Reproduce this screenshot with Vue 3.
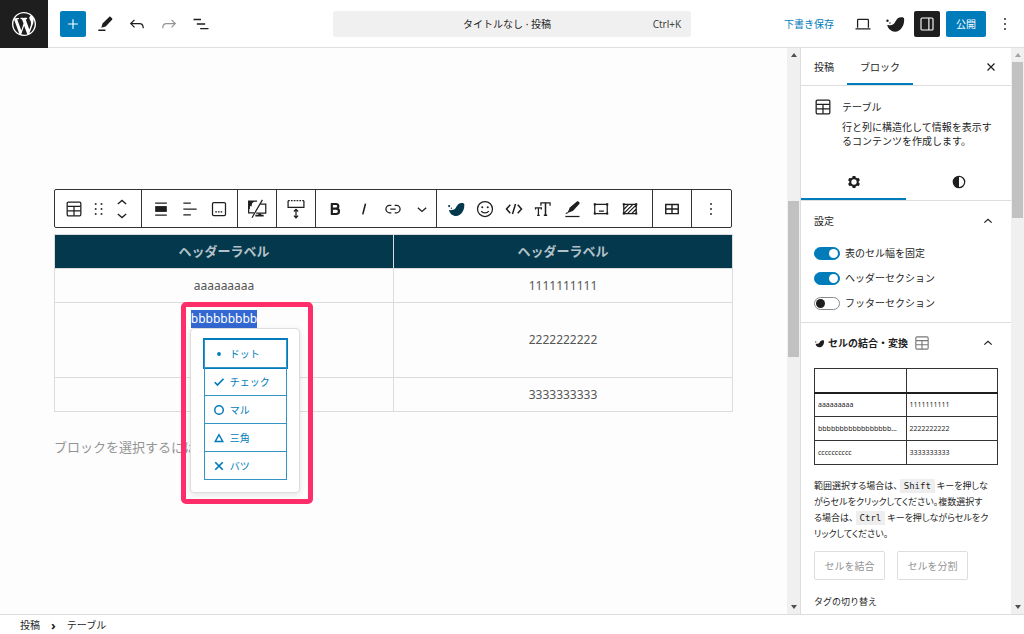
<script setup>
import { ref } from 'vue'

const swell =
  '<path fill="currentColor" stroke="none" d="M3.500 13.200c2.800.4 5.500.1 7.300-1.500C12.800 9.800 13.500 5 18.500 4.700c2.200-.1 3.600.4 3.500 2-.1 2.600 0 5-1.900 8.300-2 3.500-5 5.400-8.100 5.400-4 0-7.500-2.700-8.500-7.200z"/><circle cx="3.800" cy="8.500" r="1.300" fill="currentColor" stroke="none"/><circle cx="6.500" cy="11" r=".8" fill="currentColor" stroke="none"/>'

const icons = {
  plus: '<path d="M12 5.500v13M5.500 12h13"/>',
  pen: '<path fill="currentColor" stroke="none" d="M20.500 5.200l-1.800-1.700c-.5-.5-1.300-.5-1.800 0L9 11.400 7.600 16.500l5.200-1.500 7.700-8c.5-.5.500-1.300 0-1.800z"/><path stroke-width="1.800" d="M4 19.500h8.500"/>',
  undo: '<path d="M9 7l-4.500 4.500L9 16M5 11.500h10c3 0 4.500 1.800 4.500 5.500"/>',
  redo: '<path d="M15 7l4.500 4.500L15 16M19 11.500H9c-3 0-4.500 1.800-4.500 5.500"/>',
  list: '<path stroke-width="1.700" d="M3 6.500h9M7 12h10M11 17.500h10"/>',
  laptop: '<path d="M5.500 16.500V7.500c0-.6.400-1 1-1h11c.6 0 1 .4 1 1v9M3 17.800h18"/>',
  panel: '<rect x="4" y="4" width="16" height="16" rx="1.500"/><path d="M14.500 4v16"/>',
  dots: '<g fill="currentColor" stroke="none"><rect x="11" y="5" width="2" height="2"/><rect x="11" y="11" width="2" height="2"/><rect x="11" y="17" width="2" height="2"/></g>',
  close: '<path stroke-width="2" d="M6 6l12 12M18 6L6 18"/>',
  table: '<rect x="3.800" y="3.800" width="16.400" height="16.400" rx="1.500"/><path d="M4 8.800h16M4 14.300h16M12 9v11"/>',
  drag: '<g fill="currentColor" stroke="none"><rect x="7" y="5" width="2" height="2"/><rect x="7" y="11" width="2" height="2"/><rect x="7" y="17" width="2" height="2"/><rect x="14" y="5" width="2" height="2"/><rect x="14" y="11" width="2" height="2"/><rect x="14" y="17" width="2" height="2"/></g>',
  mover: '<path d="M7 6l5-4.300L17 6M7 18l5 4.300L17 18"/>',
  align: '<path d="M5 4.800h14M5 19.200h14"/><path fill="currentColor" stroke="none" d="M5 8.500h14v7H5z"/>',
  textAlign: '<path d="M4 5h9M4 12h16M4 19h9"/>',
  caption: '<rect x="4.200" y="4.200" width="15.600" height="15.600" rx="1.500"/><path stroke-dasharray="2 1.200" d="M7.500 15.500h9"/>',
  screens: '<path d="M12 2.500H2v14h6.500M16 6h6.500v11H11"/><path d="M18.500 1L6 22.500"/><path fill="currentColor" stroke="none" d="M2 2.500h7L6 5.500 5.500 9 3.500 8.500 3.500 12H2zM10 19h3l1.500-1.500h2L17.500 19H20v2H10z"/>',
  spacer: '<path d="M2.500 2v8h19V2"/><path stroke-dasharray="2 1.400" d="M2.500 2h19"/><path d="M12 13v9M9.500 15L12 12.500 14.500 15M9.500 20l2.500 2.500 2.500-2.500"/>',
  bold: '<path stroke-width="2.600" d="M8.200 6v12M7 6h6c2 0 3 1.200 3 2.800s-1 2.800-3 2.800H8M8 11.600h5.300c2.200 0 3.500 1.300 3.500 3.200s-1.300 3.200-3.500 3.200H7"/>',
  italic: '<path stroke-width="1.900" d="M13.800 5.500L10.500 18.500"/>',
  link: '<path d="M10 7.500H8a4.500 4.500 0 000 9h2M14 7.500h2a4.500 4.500 0 010 9h-2M8.800 12h6.400"/>',
  down: '<path d="M7 10.500l5 4.500 5-4.500"/>',
  up: '<path stroke-width="1.800" d="M6.500 14.500L12 9.500l5.500 5"/>',
  swell,
  smile: '<circle cx="12" cy="12" r="9"/><path d="M7.500 14.500c2 3 7 3 9 0"/><circle cx="8.700" cy="9.800" r="1.200" fill="currentColor" stroke="none"/><circle cx="15.300" cy="9.800" r="1.200" fill="currentColor" stroke="none"/>',
  code: '<path stroke-width="1.800" d="M7.500 7L3 12l4.500 5M16.500 7l4.500 5-4.500 5M13.800 6l-3.600 12"/>',
  size: '<path stroke-width="1.800" d="M15 4.500v15M13 19.500h4"/><path d="M9.500 8V4.500h11V8M3 12.500v-2h7v2M6.500 10.500v9M5 19.500h3"/>',
  marker: '<path fill="currentColor" stroke="none" d="M20.500 3.500c-1-1-2-1-3-.2L9 10.500l-.5 2-2.500 4.500 5-2 2-.5 7.500-8.300c.8-1 .8-1.900 0-2.700zM5.500 16l2 1.500-3.500.5z"/><path d="M4 21h17"/>',
  frame: '<path d="M4.500 6.500h15v11h-15zM9.500 14.500h6"/><g fill="currentColor" stroke="none"><path d="M3.300 5.200h2.500v2.500H3.300zM18.200 5.200h2.500v2.500h-2.500zM3.300 16.200h2.500v2.500H3.300zM18.200 16.200h2.500v2.500h-2.500z"/></g>',
  hatch: '<path d="M4.500 6.500h15v11h-15zM5 12l5.500-5.500M5 17L15.500 6.500M9.500 17L19.500 7M14 17.500l5.500-5.500"/><g fill="currentColor" stroke="none"><path d="M3.300 5.200h2.500v2.500H3.300zM18.200 5.200h2.500v2.500h-2.500zM3.300 16.200h2.500v2.500H3.300zM18.200 16.200h2.500v2.500h-2.500z"/></g>',
  grid: '<path stroke-width="1.700" d="M4.500 6.500h15v11h-15zM4.500 12h15M12 6v12"/>',
  cog: '<circle cx="12" cy="12" r="5" stroke-width="2.800"/><path stroke-width="4" d="M12 7.500V4M12 16.500V20M8.100 9.800L5 8M15.900 14.200L19 16M8.100 14.200L5 16M15.900 9.800L19 8"/>',
  contrast: '<circle cx="12" cy="12" r="7.600" stroke-width="1.700"/><path fill="currentColor" stroke="none" d="M12 4.500v15a7.500 7.500 0 010-15z"/>',
  dot: '<circle cx="12" cy="12" r="3.800" fill="currentColor" stroke="none"/>',
  check: '<path stroke-width="3.500" d="M3.500 12.500l5.500 5.500L21 5.500"/>',
  circle: '<circle cx="12" cy="12" r="8.500" stroke-width="3"/>',
  triangle: '<path stroke-width="3" d="M12 5.500l7.500 13.500h-15z"/>',
  cross: '<path stroke-width="3.500" d="M4.500 4.500l15 15M19.500 4.500l-15 15"/>'
}

const headerTools = [
  { icon: 'pen', label: 'ツール' },
  { icon: 'undo', label: '元に戻す' },
  { icon: 'redo', label: 'やり直し', off: true },
  { icon: 'list', label: 'ドキュメント概観' }
]

const groups = [
  { size: 'w87', items: ['table', 'drag', 'mover'] },
  { size: 'w96', items: ['align', 'textAlign', 'caption'] },
  { size: 'w39', items: ['screens'] },
  { size: 'w39', items: ['spacer'] },
  { size: 'w121', items: ['bold', 'italic', 'link', 'down'] },
  { size: 'w216', items: ['swell', 'smile', 'code', 'size', 'marker', 'frame', 'hatch'] },
  { size: 'w39', items: ['grid'] },
  { size: 'w39', items: ['dots'] }
]

const marks = [
  { icon: 'dot', text: 'ドット' },
  { icon: 'check', text: 'チェック' },
  { icon: 'circle', text: 'マル' },
  { icon: 'triangle', text: '三角' },
  { icon: 'cross', text: 'バツ' }
]
const chosen = ref(0)

const toggles = ref([
  { id: 'fixed', text: '表のセル幅を固定', on: true },
  { id: 'head', text: 'ヘッダーセクション', on: true },
  { id: 'foot', text: 'フッターセクション', on: false }
])

const miniRows = [
  ['', ''],
  ['aaaaaaaaa', '1111111111'],
  ['bbbbbbbbbbbbbbbbb…', '2222222222'],
  ['cccccccccc', '3333333333']
]
</script>

<template>
  <div class="editor">
    <header class="top">
      <div class="top-left">
        <a href="#" class="logo" aria-label="WordPress">
          <svg viewBox="0 0 20 20"><path fill="currentColor" d="M20 10c0-5.510-4.490-10-10-10C4.480 0 0 4.490 0 10c0 5.520 4.480 10 10 10 5.510 0 10-4.480 10-10zM7.780 15.370L4.370 6.220c.55-.02 1.170-.08 1.170-.08.5-.06.44-1.130-.06-1.110 0 0-1.450.11-2.370.11-.18 0-.37 0-.58-.01C4.120 2.690 6.870 1.110 10 1.110c2.330 0 4.450.87 6.050 2.340-.68-.11-1.650.39-1.650 1.580 0 .74.45 1.360.9 2.100.35.61.55 1.360.55 2.460 0 1.490-1.400 5-1.400 5l-3.030-8.370c.54-.02.82-.17.82-.17.5-.05.44-1.250-.06-1.220 0 0-1.440.12-2.380.12-.87 0-2.330-.12-2.330-.12-.5-.03-.56 1.200-.06 1.220l.92.08 1.260 3.410zM17.410 10c.24-.64.74-1.870.43-4.250.7 1.290 1.050 2.710 1.050 4.250 0 3.290-1.730 6.240-4.400 7.780.97-2.590 1.940-5.200 2.920-7.780zM6.100 18.090C3.120 16.650 1.110 13.530 1.110 10c0-1.300.23-2.480.72-3.590C3.250 10.300 4.670 14.200 6.100 18.090zm4.030-6.630l2.580 6.980c-.86.29-1.760.45-2.710.45-.79 0-1.570-.11-2.290-.33.81-2.380 1.620-4.740 2.420-7.100z"/></svg>
        </a>
        <button class="sq blue" aria-label="ブロックを追加"><svg class="ico s18" viewBox="0 0 24 24" v-html="icons.plus" /></button>
        <button v-for="t in headerTools" :key="t.icon" class="sq" :class="{ off: t.off }" :aria-label="t.label">
          <svg class="ico" viewBox="0 0 24 24" v-html="icons[t.icon]" />
        </button>
      </div>
      <button class="command">
        <span>タイトルなし · 投稿</span>
        <span class="key">Ctrl+K</span>
      </button>
      <div class="top-right">
        <button class="save">下書き保存</button>
        <button class="sq" aria-label="表示"><svg class="ico" viewBox="0 0 24 24" v-html="icons.laptop" /></button>
        <button class="sq" aria-label="SWELL"><svg class="ico s22" viewBox="0 0 24 24" v-html="icons.swell" /></button>
        <button class="sq dark" aria-label="設定"><svg class="ico s18" viewBox="0 0 24 24" v-html="icons.panel" /></button>
        <button class="publish">公開</button>
        <button class="sq" aria-label="オプション"><svg class="ico" viewBox="0 0 24 24" v-html="icons.dots" /></button>
      </div>
    </header>

    <div class="middle">
      <main class="canvas">
        <div class="page">
          <div class="toolbar" role="toolbar" aria-label="ブロックツール">
            <div v-for="(g, i) in groups" :key="i" class="group" :class="g.size">
              <button v-for="name in g.items" :key="name" :class="name" :aria-label="name">
                <svg class="ico" viewBox="0 0 24 24" v-html="icons[name]" />
              </button>
            </div>
          </div>

          <table class="content">
            <thead>
              <tr><th>ヘッダーラベル</th><th>ヘッダーラベル</th></tr>
            </thead>
            <tbody>
              <tr><td>aaaaaaaaa</td><td>1111111111</td></tr>
              <tr class="tall">
                <td class="editing">
                  <div class="anchor">
                    <span class="selected">bbbbbbbbb</span>
                    <div class="popup">
                      <button
                        v-for="(m, i) in marks"
                        :key="m.icon"
                        :class="{ active: chosen === i }"
                        @click="chosen = i"
                      >
                        <svg class="ico s12" viewBox="0 0 24 24" v-html="icons[m.icon]" />
                        <span>{{ m.text }}</span>
                      </button>
                    </div>
                    <div class="highlight"></div>
                  </div>
                </td>
                <td>2222222222</td>
              </tr>
              <tr><td></td><td>3333333333</td></tr>
            </tbody>
          </table>

          <p class="placeholder">ブロックを選択するには</p>
        </div>
        <div class="scroll main-scroll"><i class="arrow up"></i><i class="thumb"></i><i class="arrow down"></i></div>
      </main>

      <aside class="side">
        <div class="side-body">
          <div class="tabs">
            <button>投稿</button>
            <button class="current">ブロック</button>
            <button class="close" aria-label="閉じる"><svg class="ico s14" viewBox="0 0 24 24" v-html="icons.close" /></button>
          </div>

          <div class="card">
            <svg class="ico" viewBox="0 0 24 24" v-html="icons.table" />
            <div>
              <h2>テーブル</h2>
              <p>行と列に構造化して情報を表示す<br>るコンテンツを作成します。</p>
            </div>
          </div>

          <div class="modes">
            <button class="current" aria-label="設定"><svg class="ico s18" viewBox="0 0 24 24" v-html="icons.cog" /></button>
            <button aria-label="スタイル"><svg class="ico s18" viewBox="0 0 24 24" v-html="icons.contrast" /></button>
          </div>

          <section class="settings">
            <button class="panel-title">設定<svg class="ico chev" viewBox="0 0 24 24" v-html="icons.up" /></button>
            <div v-for="t in toggles" :key="t.id" class="toggle">
              <input :id="t.id" v-model="t.on" type="checkbox">
              <label :for="t.id">{{ t.text }}</label>
            </div>
          </section>

          <section class="merge">
            <button class="panel-title strong">
              <svg class="ico s10" viewBox="0 0 24 24" v-html="icons.swell" />
              <span>セルの結合・変換</span>
              <svg class="ico s18 faint" viewBox="0 0 24 24" v-html="icons.table" />
              <svg class="ico chev" viewBox="0 0 24 24" v-html="icons.up" />
            </button>
            <table class="mini">
              <tbody>
                <tr v-for="(row, i) in miniRows" :key="i"><td v-for="(c, j) in row" :key="j">{{ c }}</td></tr>
              </tbody>
            </table>
            <p class="help">
              範囲選択する場合は、<code>Shift</code>キーを押しな<br>がらセルをクリックしてください。複数選択す<br>る場合は、<code>Ctrl</code>キーを押しながらセルをク<br>リックしてください。
            </p>
            <div class="pair">
              <button disabled>セルを結合</button>
              <button disabled>セルを分割</button>
            </div>
            <h3>タグの切り替え</h3>
          </section>
        </div>
        <div class="scroll side-scroll"><i class="arrow up dim"></i><i class="thumb"></i><i class="arrow down"></i></div>
      </aside>
    </div>

    <footer class="crumbs">
      <a href="#">投稿</a><span class="sep">›</span><a href="#">テーブル</a>
    </footer>
  </div>
</template>

<style>
body { margin: 0; overflow: hidden; }
</style>

<style scoped>
.editor {
  display: flex;
  flex-direction: column;
  height: 100vh;
  background: #fff;
  color: #1e1e1e;
  font: 10px/14px "Noto Sans", "Noto Sans CJK JP", sans-serif;
}
.editor * { box-sizing: border-box; }
button {
  border: 0;
  padding: 0;
  margin: 0;
  background: none;
  color: inherit;
  font: inherit;
  cursor: pointer;
}
a { color: inherit; text-decoration: none; }
h2, h3, p { margin: 0; font-size: 10px; font-weight: 400; }
.ico {
  display: block;
  flex: none;
  width: 20px;
  height: 20px;
  fill: none;
  stroke: currentColor;
  stroke-width: 1.500;
}
.s22 { width: 22px; height: 22px; }
.s18 { width: 18px; height: 18px; }
.s14 { width: 14px; height: 14px; }
.s12 { width: 12px; height: 12px; }
.s10 { width: 11px; height: 11px; }

.top {
  display: grid;
  grid-template-columns: 1fr 35% 1fr;
  align-items: center;
  flex: none;
  height: 48px;
  border-bottom: 1px solid #e0e0e0;
}
.top-left, .top-right { display: flex; align-items: center; gap: 6px; }
.top-right { justify-content: flex-end; padding-right: 6px; }
.logo {
  display: grid;
  place-items: center;
  width: 48px;
  height: 48px;
  margin-right: 6px;
  background: #1e1e1e;
  color: #fff;
}
.logo svg { width: 24px; height: 24px; }
.sq {
  display: grid;
  place-items: center;
  width: 26px;
  height: 26px;
  border-radius: 2px;
}
.blue, .publish { background: #007cba; color: #fff; }
.dark { background: #1e1e1e; color: #fff; }
.off { color: #949494; }
.command {
  display: flex;
  justify-content: center;
  align-items: center;
  position: relative;
  height: 26px;
  padding-right: 10px;
  border-radius: 3px;
  background: #f0f0f0;
}
.key { position: absolute; right: 10px; color: #444; }
.save { margin-right: 10px; color: #007cba; }
.publish { width: 40px; height: 26px; border-radius: 2px; }

.middle { display: flex; flex: 1; min-height: 0; }
.canvas { display: flex; flex: 1; min-width: 0; background: #fdfdfd; }
.page { flex: 1; min-width: 0; padding: 141px 54px 0; }
.toolbar {
  display: flex;
  width: max-content;
  height: 39px;
  border: 1px solid #333;
  border-radius: 2px;
  background: #fff;
}
.group { display: flex; padding-left: 4px; border-right: 1px solid #333; }
.group:last-child { border-right: 0; }
.group button { display: grid; place-items: center; width: 29px; }
.w87 { width: 87px; }
.w87 .table { width: 30px; }
.w87 .drag { width: 18px; }
.w87 .mover { width: 30px; }
.w96 { width: 96px; }
.w39 { width: 39px; }
.w121 { width: 121px; padding-left: 5px; }
.w216 { width: 216px; }
.group .swell { color: #04384c; }

.content {
  width: 100%;
  margin-top: 6px;
  border-collapse: collapse;
  table-layout: fixed;
  color: #555;
  font-size: 12px;
  line-height: 18px;
  text-align: center;
}
.content th {
  height: 34px;
  padding: 0 0 2px;
  border: 1px solid #dcdcdc;
  background: #04384c;
  color: #b3c2c9;
  font-size: 13px;
}
.content td { height: 34px; padding: 0; border: 1px solid #dcdcdc; }
.content .tall td { height: 75px; }
.content .editing { padding-top: 7px; vertical-align: top; }
.anchor { display: inline-block; position: relative; }
.selected { display: block; background: #3367d1; color: #fff; }
.popup {
  position: absolute;
  z-index: 1;
  top: 100%;
  left: -1px;
  width: 110px;
  padding: 10px 12px 12px 13px;
  border: 1px solid #ddd;
  border-radius: 4px;
  background: #fff;
  box-shadow: 0 2px 6px rgba(0, 0, 0, 0.1);
}
.popup button {
  display: flex;
  align-items: center;
  gap: 5px;
  width: 100%;
  height: 28px;
  padding-left: 8px;
  border: 1px solid #3394c7;
  border-top: 0;
  color: #007cba;
  font-size: 10px;
}
.popup .active {
  height: 29px;
  border-top: 1px solid #007cba;
  box-shadow: 0 0 0 1px #007cba;
}
.highlight {
  position: absolute;
  z-index: 2;
  top: -8px;
  left: -10px;
  width: 132px;
  height: 202px;
  border: 5px solid #ff2e6a;
  border-radius: 5px;
  pointer-events: none;
}
.placeholder { margin-top: 25px; color: #949494; font-size: 13px; line-height: 20px; }

.scroll {
  display: flex;
  flex-direction: column;
  align-items: center;
  flex: none;
  width: 13px;
  background: #f0f0f0;
}
.scroll .thumb { width: 11px; height: 156px; background: #c1c1c1; }
.main-scroll .thumb { margin-top: 139px; }
.arrow { width: 0; height: 0; margin: 5px 0; border: 3px solid transparent; }
.arrow.up { margin-top: 2px; border-bottom: 4px solid #505050; }
.arrow.down { margin: auto 0 2px; border-top: 4px solid #505050; }
.arrow.dim { border-bottom-color: #a3a3a3; }

.side { display: flex; flex: none; width: 224px; border-left: 1px solid #ddd; }
.side-body { flex: 1; min-width: 0; overflow: hidden; }
.tabs { display: flex; height: 38px; border-bottom: 1px solid #ddd; }
.tabs button { padding: 0 13px; }
.tabs .current { box-shadow: inset 0 -2px #007cba; }
.tabs .close { margin-left: auto; }
.card { display: flex; align-items: flex-start; gap: 9px; padding: 11px 0 0 12px; }
.card h2 { margin-top: 3px; line-height: 14px; }
.card p { margin-top: 6px; white-space: nowrap; }
.modes { display: flex; height: 38px; margin-top: 15px; border-bottom: 1px solid #ddd; }
.modes button { display: grid; place-items: center; flex: 1; }
.modes .current { box-shadow: inset 0 -2px #007cba; }
.settings { padding: 0 13px 12px; border-bottom: 1px solid #ddd; }
.panel-title { display: flex; align-items: center; width: 100%; height: 40px; padding-right: 2px; }
.chev { width: 16px; height: 16px; margin-left: auto; }
.settings .panel-title { margin-bottom: -1px; }
.toggle { display: flex; align-items: center; gap: 5px; height: 14px; margin-top: 6px; }
.toggle + .toggle { margin-top: 11px; }
.toggle input {
  appearance: none;
  display: flex;
  align-items: center;
  width: 26px;
  height: 13px;
  margin: 0;
  padding: 0 1px;
  border: 1px solid #8a8a8a;
  border-radius: 7px;
}
.toggle input::before { content: ""; width: 9px; height: 9px; border-radius: 50%; background: #1e1e1e; }
.toggle input:checked { justify-content: flex-end; border-color: #007cba; background: #007cba; }
.toggle input:checked::before { background: #fff; }
.merge { padding: 0 13px; }
.strong { gap: 3px; font-weight: 700; }
.faint { margin-left: 2px; color: #777; }
.mini {
  width: 100%;
  margin-top: 5px;
  border-collapse: collapse;
  table-layout: fixed;
  font-size: 7px;
  line-height: 10px;
}
.mini td {
  height: 24px;
  padding: 0 3px;
  border: 1px solid #333;
  white-space: nowrap;
}
.mini tr:first-child td { border-bottom: 2px solid #1e1e1e; }
.help { margin-top: 13px; font-size: 9px; line-height: 16px; white-space: nowrap; font-feature-settings: "palt"; }
.help code { padding: 2px 4px; margin: 0 2px; background: #eee; font: 9px/12px "DejaVu Sans Mono", monospace; }
.pair { display: flex; gap: 12px; margin-top: 9px; }
.pair button { width: 71px; height: 29px; border: 1px solid #ddd; border-radius: 2px; color: #949494; }
.merge h3 { margin-top: 15px; font-size: 9px; }

.crumbs {
  display: flex;
  align-items: center;
  gap: 11px;
  flex: none;
  height: 20px;
  padding-left: 20px;
  border-top: 1px solid #ddd;
}
.sep { font-size: 13px; font-weight: 700; }
</style>
